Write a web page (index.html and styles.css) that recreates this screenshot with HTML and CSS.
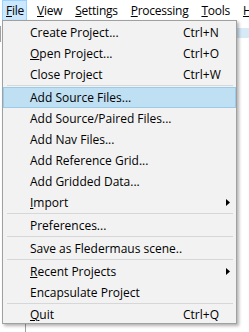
FILE: index.html
```html
<!DOCTYPE html>
<html lang="en">
<head>
    <meta charset="UTF-8">
    <title>File menu</title>
    <link rel="stylesheet" href="styles.css">
</head>
<body>
    <div class="window">
        <div class="menubar">
            <span class="bar-item active"><u>F</u>ile</span>
            <span class="bar-item"><u>V</u>iew</span>
            <span class="bar-item"><u>S</u>ettings</span>
            <span class="bar-item"><u>P</u>rocessing</span>
            <span class="bar-item"><u>T</u>ools</span>
            <span class="bar-item"><u>H</u>elp</span>
        </div>
        <div class="content">
            <div class="side-edge"></div>
            <div class="blue-strip"></div>
            <div class="tree-line"></div>
        </div>

        <!-- popup for the File menu -->
        <div class="popup">
            <div class="item"><span class="label">Create Project...</span><span class="key">Ctrl+N</span></div>
            <div class="item"><span class="label"><u>O</u>pen Project...</span><span class="key">Ctrl+O</span></div>
            <div class="item"><span class="label">Close Project</span><span class="key">Ctrl+W</span></div>
            <div class="sep"></div>
            <div class="item hover"><span class="label">Add Source Files...</span><span class="key"></span></div>
            <div class="item"><span class="label">Add Source/Paired Files...</span><span class="key"></span></div>
            <div class="item"><span class="label">Add Nav Files...</span><span class="key"></span></div>
            <div class="item"><span class="label">Add Reference Grid...</span><span class="key"></span></div>
            <div class="item"><span class="label">Add Gridded Data...</span><span class="key"></span></div>
            <div class="item"><span class="label"><u>I</u>mport</span><span class="key arrow"><svg width="4" height="7" viewBox="0 0 4 7"><path d="M0 0 L4 3.5 L0 7 Z" fill="#000"/></svg></span></div>
            <div class="sep"></div>
            <div class="item"><span class="label">Preferences...</span><span class="key"></span></div>
            <div class="sep"></div>
            <div class="item"><span class="label">Save as Fledermaus scene..</span><span class="key"></span></div>
            <div class="sep"></div>
            <div class="item"><span class="label"><u>R</u>ecent Projects</span><span class="key arrow"><svg width="4" height="7" viewBox="0 0 4 7"><path d="M0 0 L4 3.5 L0 7 Z" fill="#000"/></svg></span></div>
            <div class="item"><span class="label">Encapsulate Project</span><span class="key"></span></div>
            <div class="sep"></div>
            <div class="item last"><span class="label"><u>Q</u>uit</span><span class="key">Ctrl+Q</span></div>
        </div>
    </div>
</body>
</html>
```

FILE: styles.css
```css
body { margin: 0; background: #fff; font-family: "Open Sans", "Noto Sans", sans-serif; font-size: 12px; color: #000; }
.window { position: relative; width: 249px; height: 332px; overflow: hidden; }
.menubar { display: flex; height: 20px; padding-left: 2px; white-space: nowrap; }
.bar-item { padding: 0 2px 0 3px; margin-right: 6px; line-height: 19px; height: 19px; border: 1px solid transparent; letter-spacing: -0.25px; flex-shrink: 0; }
.bar-item.active { background: #cce8ff; border-color: #99d1ff; }
.content { position: relative; height: 312px; }
.side-edge { position: absolute; left: 0; top: 6px; width: 1px; height: 16px; background: #a0a0a0; }
.blue-strip { position: absolute; right: 0; top: 8px; width: 12px; height: 10px; background: #d5e9f7; }
.tree-line { position: absolute; left: 25px; top: 304px; width: 1px; height: 12px; background: #a0a0a0; }

.popup { position: absolute; left: 2px; top: 20px; width: 233px; background: #f2f2f2; border: 1px solid #a0a0a0; padding: 1px 0 0; box-shadow: 2px 2px 3px rgba(0,0,0,0.3); }
.item { display: flex; align-items: center; height: 21px; padding-left: 26px; border: 1px solid transparent; box-sizing: border-box; white-space: nowrap; }
.item.last { height: 18px; }
.item.hover { background: #bfdff3; border-color: #9ccbe8; }
.label { flex: 1; }
.key { width: 52px; }
.arrow { display: flex; justify-content: flex-end; padding-right: 5px; box-sizing: border-box; }
.arrow svg { display: block; }
.sep { height: 2px; margin: 0 3px 0 4px; border-top: 1px solid #d7d7d7; box-sizing: border-box; }
```
